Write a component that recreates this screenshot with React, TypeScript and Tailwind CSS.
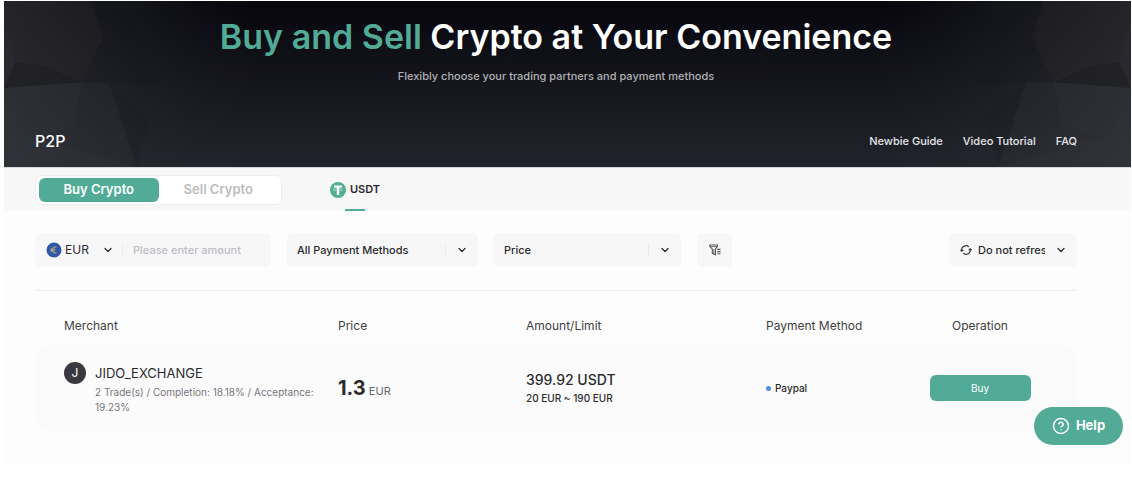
import React, { useState } from 'react';
import { ChevronDown, CircleHelp } from 'lucide-react';

const guideLinks = ['Newbie Guide', 'Video Tutorial', 'FAQ'];

const offers = [
  {
    merchant: 'JIDO_EXCHANGE',
    trades: 2,
    completion: '18.18%',
    acceptance: '19.23%',
    price: '1.3',
    fiat: 'EUR',
    amount: '399.92 USDT',
    limit: '20 EUR ~ 190 EUR',
    payment: 'Paypal'
  }
];

const Facets: React.FC<{ id: string; className: string }> = ({ id, className }) => (
  <svg className={className} viewBox="0 0 250 166" preserveAspectRatio="none" aria-hidden="true">
    <defs>
      <linearGradient id={id} x1="0" x2="1" y1="0" y2="0">
        <stop offset="0" stopColor="#3a3c40" stopOpacity="0.55" />
        <stop offset="0.45" stopColor="#2c2e34" stopOpacity="0.4" />
        <stop offset="1" stopColor="#20232a" stopOpacity="0" />
      </linearGradient>
    </defs>
    <rect width="250" height="166" fill={`url(#${id})`} />
    <path d="M0 0h88l12 36-22 45-66-20L0 20z" fill="#2a2624" fillOpacity="0.3" />
    <path d="M88 0h22l28 34-38 2z" fill="#101114" fillOpacity="0.15" />
    <path d="M0 20l12 41-12 14z" fill="#2b2e33" fillOpacity="0.35" />
    <path d="M12 61l28 4 38 16-78 6z" fill="#1c1b1e" fillOpacity="0.5" />
    <path d="M0 87l78-6-8 45-40 10-30-28z" fill="#33353d" fillOpacity="0.2" />
    <path d="M0 87l78-6 28 1 28 84H0z" fill="#33353c" fillOpacity="0.22" />
    <path d="M0 108l30 28 104 30H0z" fill="#34363d" fillOpacity="0.25" />
    <path d="M100 36l38-2 18 50-50-2-28-1z" fill="#14171d" fillOpacity="0.15" />
    <path d="M106 82l42 34-14 50z" fill="#191b20" fillOpacity="0.25" />
  </svg>
);

const EuroIcon = () => (
  <svg className="h-4 w-4 shrink-0" viewBox="0 0 16 16" aria-hidden="true">
    <circle cx="8" cy="8" r="7.5" fill="#2f58a8" />
    <path
      d="M10.4 5.3A3.2 3.2 0 0 0 5.8 8a3.2 3.2 0 0 0 4.6 2.7M4.4 7.2h4.8M4.4 8.9h4.4"
      fill="none"
      stroke="#c4b968"
      strokeWidth="1"
    />
  </svg>
);

const TetherIcon = () => (
  <svg className="h-4 w-4 shrink-0" viewBox="0 0 16 16" aria-hidden="true">
    <circle cx="8" cy="8" r="8" fill="#53ae94" />
    <path d="M4 3.4h8v2.2H9.2v7.3H6.8V5.6H4z" fill="#fff" />
    <ellipse cx="8" cy="7.6" rx="4.9" ry="1.1" fill="none" stroke="#fff" strokeOpacity="0.8" strokeWidth="0.5" />
  </svg>
);

const FilterIcon = () => (
  <svg className="h-3 w-3" viewBox="0 0 12 12" fill="none" stroke="#55555a" aria-hidden="true">
    <path d="M0.8 1h7.6v1.6L6.4 4.9v5.9L3.3 9.2V4.9L0.8 2.6z" strokeWidth="1.1" />
    <path d="M1 2.6h7.2M4.8 5v5" strokeWidth="0.8" />
    <path d="M8.2 5.4h3.3M8.2 7.6h3.3M8.2 9.8h3.3" strokeWidth="1.1" />
  </svg>
);

const RefreshIcon = () => (
  <svg className="h-3 w-3 shrink-0" viewBox="0 0 12 12" fill="none" stroke="#333" strokeWidth="1.2" aria-hidden="true">
    <path d="M1.8 6.8A4.2 4.2 0 0 1 8.8 2.9M10.2 5.2A4.2 4.2 0 0 1 3.2 9.1" />
    <path d="M0.4 5.8l1.4 1.4 1.5-1.3M11.6 6.2l-1.4-1.4-1.5 1.3" />
  </svg>
);

interface FilterSelectProps {
  label: string;
  options: string[];
  className: string;
}

const FilterSelect: React.FC<FilterSelectProps> = ({ label, options, className }) => (
  <div className={`relative flex h-[34px] items-center rounded-md bg-[#f7f7f8] ${className}`}>
    <select
      aria-label={label}
      className="h-full w-full appearance-none bg-transparent pr-8 pl-[10px] font-medium outline-none"
    >
      {options.map((option) => (
        <option key={option}>{option}</option>
      ))}
    </select>
    <span className="pointer-events-none absolute right-0 flex items-center gap-[10px] pr-[10px]">
      <span className="h-3 w-px bg-[#ececee]" />
      <ChevronDown className="h-3 w-3" strokeWidth={2.5} />
    </span>
  </div>
);

const App: React.FC = () => {
  const [side, setSide] = useState('Buy');
  const [amount, setAmount] = useState('');

  return (
    <div className="min-h-screen bg-white pt-px pr-px pl-1 font-['Inter',sans-serif] text-[11px] text-[#2b2b2e]">
      <header className="relative overflow-hidden bg-linear-to-b from-[#07060f] via-[#15161b] to-[#21242c] pr-[54px] pl-[31px] text-white">
        <Facets id="facet-left" className="absolute top-0 left-0 h-full w-[22%]" />
        <Facets id="facet-right" className="absolute top-0 right-0 h-full w-[22%] -scale-x-100" />
        <div className="relative flex h-[166px] flex-col items-center pt-4">
          <h1 className="text-[34px] leading-10 font-semibold">
            <span className="text-[#51ab96]">Buy and Sell</span> Crypto at Your Convenience
          </h1>
          <p className="mt-[11px] leading-4 font-medium text-[#b0b0b4]">
            Flexibly choose your trading partners and payment methods
          </p>
          <div className="mt-auto flex w-full items-center justify-between pb-4">
            <h2 className="text-base leading-5 font-medium">P2P</h2>
            <nav className="flex gap-5 text-[#e6e6e8]">
              {guideLinks.map((link) => (
                <a key={link} href="#" className="font-medium">
                  {link}
                </a>
              ))}
            </nav>
          </div>
        </div>
      </header>

      <main className="bg-[#fdfdfd] pb-8">
        <div className="flex h-11 items-center border-t border-[#d9d9dc] bg-[#f7f7f8] pr-[54px] pl-[31px]">
          <div className="flex h-[30px] w-[247px] rounded-md border border-[#eeeeef] bg-white px-[3px] py-[2px]">
            {['Buy', 'Sell'].map((item) => (
              <button
                key={item}
                type="button"
                onClick={() => setSide(item)}
                className={`flex-1 rounded-md text-[13px] font-semibold ${
                  side === item ? 'bg-[#51ab96] text-white' : 'text-[#bcbcc0]'
                }`}
              >
                {item} Crypto
              </button>
            ))}
          </div>
          <button
            type="button"
            className="relative ml-12 flex h-full items-center gap-1 font-semibold"
          >
            <TetherIcon />
            USDT
            <span className="absolute bottom-0 left-1/2 h-[2px] w-5 -translate-x-1/2 bg-[#51ab96]" />
          </button>
        </div>

        <div className="mr-[54px] ml-[31px]">
          <div className="flex items-center gap-4 border-b border-[#ededef] pt-[22px] pb-[23px]">
            <div className="flex h-[34px] w-[236px] items-center rounded-md bg-[#f7f7f8] pl-[11px]">
              <EuroIcon />
              <div className="relative flex items-center">
                <select
                  aria-label="Currency"
                  className="w-14 appearance-none bg-transparent pl-[3px] text-xs outline-none"
                >
                  <option>EUR</option>
                  <option>USD</option>
                </select>
                <ChevronDown className="pointer-events-none absolute right-1 h-3 w-3" strokeWidth={2.5} />
              </div>
              <span className="ml-1 h-3 w-px bg-[#ececee]" />
              <input
                aria-label="Amount"
                value={amount}
                onChange={(e) => setAmount(e.target.value)}
                placeholder="Please enter amount"
                className="min-w-0 flex-1 bg-transparent pl-[10px] font-medium outline-none placeholder:text-[#bdbdc4]"
              />
            </div>
            <FilterSelect
              label="Payment method"
              className="w-[191px]"
              options={['All Payment Methods', 'Paypal']}
            />
            <FilterSelect label="Sort by" className="w-[187px]" options={['Price', 'Amount']} />
            <button
              type="button"
              aria-label="More filters"
              className="flex h-[34px] w-[35px] items-center justify-center rounded-md bg-[#f7f7f8]"
            >
              <FilterIcon />
            </button>
            <div className="relative ml-auto flex h-[34px] w-32 items-center rounded-md bg-[#f7f7f8] pl-[11px]">
              <RefreshIcon />
              <select
                aria-label="Refresh interval"
                className="ml-[6px] w-[67px] appearance-none overflow-hidden bg-transparent font-medium outline-none"
              >
                <option>Do not refresh</option>
                <option>5s to refresh</option>
              </select>
              <ChevronDown className="pointer-events-none absolute right-[10px] h-3 w-3" strokeWidth={2.5} />
            </div>
          </div>

          <table className="mt-4 w-full table-fixed border-separate border-spacing-0 text-left">
            <colgroup>
              <col className="w-[303px]" />
              <col className="w-[188px]" />
              <col className="w-[240px]" />
              <col className="w-[117px]" />
              <col className="w-[194px]" />
            </colgroup>
            <thead>
              <tr className="h-[38px] text-xs text-[#3f3f43]">
                <th className="pl-[29px] font-normal">Merchant</th>
                <th className="font-normal">Price</th>
                <th className="font-normal">Amount/Limit</th>
                <th className="font-normal">Payment Method</th>
                <th className="text-center font-normal">Operation</th>
              </tr>
            </thead>
            <tbody>
              {offers.map((offer) => (
                <tr key={offer.merchant} className="h-[86px] bg-[#fbfbfc]">
                  <td className="rounded-l-2xl pr-4 pl-[29px]">
                    <div className="flex gap-[9px]">
                      <span className="flex h-[22px] w-[22px] shrink-0 items-center justify-center rounded-full bg-[#3a393f] text-xs text-white">
                        {offer.merchant.charAt(0)}
                      </span>
                      <div>
                        <p className="text-[13px] leading-[23px]">{offer.merchant}</p>
                        <p className="text-[10px] leading-[15px] text-[#77777d]">
                          {`${offer.trades} Trade(s) / Completion: ${offer.completion} / Acceptance: ${offer.acceptance}`}
                        </p>
                      </div>
                    </div>
                  </td>
                  <td>
                    <span className="text-xl font-bold">{offer.price}</span>{' '}
                    <span className="text-[#66666a]">{offer.fiat}</span>
                  </td>
                  <td>
                    <p className="text-sm leading-5 font-medium">{offer.amount}</p>
                    <p className="text-[10px] leading-4 font-medium">{offer.limit}</p>
                  </td>
                  <td className="text-[10px] font-medium">
                    <span className="flex items-center gap-1">
                      <span className="h-[5px] w-[5px] rounded-full bg-[#4a90e2]" />
                      {offer.payment}
                    </span>
                  </td>
                  <td className="rounded-r-2xl text-center">
                    <button
                      type="button"
                      className="h-[26px] w-[101px] rounded-md bg-[#51ab96] text-[10px] text-white"
                    >
                      {side}
                    </button>
                  </td>
                </tr>
              ))}
            </tbody>
          </table>
        </div>
      </main>

      <button
        type="button"
        className="fixed right-[9px] bottom-[57px] flex h-[38px] w-[89px] items-center justify-center gap-[6px] rounded-full bg-[#51ab96] text-[13px] font-bold text-white"
      >
        <CircleHelp className="h-[18px] w-[18px]" />
        Help
      </button>
    </div>
  );
};

export default App;
